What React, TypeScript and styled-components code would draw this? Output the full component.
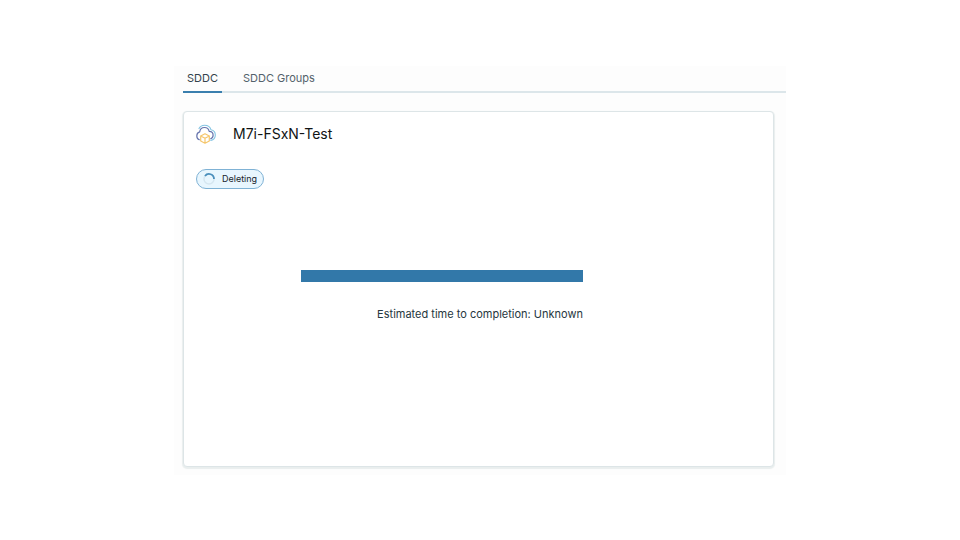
import React, { useState } from "react";
import styled, { createGlobalStyle } from "styled-components";

const GlobalStyle = createGlobalStyle`
  *, *::before, *::after { box-sizing: border-box; }
  body {
    margin: 0;
    background: #ffffff;
    color: #1b2a32;
    font-family: Inter, "Open Sans", sans-serif;
  }
`;

const Page = styled.div`
  padding: 66px 174px 65px;
`;

const Panel = styled.main`
  background: #fdfdfd;
  padding: 0 0 8px 9px;
`;

const TabList = styled.div`
  display: flex;
  gap: 17px;
  height: 27px;
  box-shadow: inset 0 -2px 0 #dce6ea;
`;

const Tab = styled.button<{ $active: boolean }>`
  border: 0;
  border-bottom: 2px solid ${(p) => (p.$active ? "#3a7fae" : "transparent")};
  background: none;
  padding: 0 4px 2px;
  font: 400 11px/22px Inter, sans-serif;
  color: ${(p) => (p.$active ? "#34434b" : "#53626b")};
  cursor: pointer;
`;

const Card = styled.section`
  margin: 18px 12px 0 0;
  min-height: 356px;
  border: 1px solid #dde5e7;
  border-radius: 4px;
  background: #ffffff;
  box-shadow: 0 1px 1px 1px #e9eeee;
  padding: 12px 0;
`;

const CardHeader = styled.header`
  display: flex;
  align-items: center;
  gap: 17px;
  height: 20px;
  padding: 0 12px;
`;

const Title = styled.h1`
  margin: 0;
  font-size: 14px;
  font-weight: 400;
  line-height: 20px;
  color: #101415;
`;

const StatusRow = styled.div`
  display: flex;
  margin-top: 25px;
  padding: 0 12px;
`;

const StatusPill = styled.span`
  display: inline-flex;
  align-items: center;
  gap: 7px;
  height: 20px;
  padding: 0 6px;
  border: 1px solid #7fb2d5;
  border-radius: 10px;
  background: #e8f6fe;
  font-size: 9px;
  line-height: 18px;
  color: #17242b;
`;

const ProgressGrid = styled.div`
  display: grid;
  grid-template-columns: 117fr 282fr 190fr;
  margin-top: 81px;
`;

const ProgressBlock = styled.div`
  grid-column: 2;
  display: flex;
  flex-direction: column;
  gap: 24px;
`;

const Bar = styled.progress`
  appearance: none;
  display: block;
  width: 100%;
  height: 12px;
  border: 0;
  background: #3278a9;
  &::-webkit-progress-bar { background: #3278a9; }
  &::-webkit-progress-value { background: #3278a9; }
`;

const Estimate = styled.label`
  text-align: right;
  white-space: nowrap;
  font-size: 11px;
  line-height: 16px;
  color: #26363e;
`;

const CloudIcon = () => (
  <svg width="20" height="20" viewBox="0 0 20 20" fill="none" strokeLinecap="round" strokeLinejoin="round" aria-hidden="true">
    <path d="M3 4.500C4.200 2.200 6 1.200 8.500 1.200c3.200 0 5.700 1.800 6.500 4.600 2.700.6 4.300 2.500 4.300 5.100 0 2.900-1.800 5-4.500 5.500" stroke="#82c3e2" strokeWidth="1.100" />
    <path d="M3.300 15.700C1.600 15 .8 13.600.8 11.900c0-2 1.100-3.500 2.900-4C4 5.200 5.900 3.500 8.500 3.500c2.300 0 4.200 1.500 4.700 3.900 2.400.1 3.900 1.600 3.900 3.800 0 1.700-.9 3-2.400 3.500" stroke="#6674ad" strokeWidth="1.200" />
    <path d="m9 9.800 4.300 2.200v5L9 19.200 4.700 17v-5L9 9.800ZM4.700 12 9 14.200l4.300-2.200M9 14.200v5" stroke="#f5c66c" strokeWidth="1.200" />
  </svg>
);

const Spinner = () => (
  <svg width="12" height="12" viewBox="0 0 12 12" fill="none" aria-hidden="true">
    <circle cx="6" cy="6" r="5" stroke="#d5e6f0" strokeWidth="1.500" />
    <path d="M2 3A5 5 0 0 1 11 6" stroke="#4a8fbc" strokeWidth="1.800" />
  </svg>
);

const tabs = ["SDDC", "SDDC Groups"];

export default function App() {
  const [active, setActive] = useState(tabs[0]);
  return (
    <>
      <GlobalStyle />
      <Page>
        <Panel>
          <TabList role="tablist">
            {tabs.map((name) => (
              <Tab key={name} type="button" role="tab" aria-selected={name === active} $active={name === active} onClick={() => setActive(name)}>
                {name}
              </Tab>
            ))}
          </TabList>
          <Card>
            <CardHeader>
              <CloudIcon />
              <Title>M7i-FSxN-Test</Title>
            </CardHeader>
            <StatusRow>
              <StatusPill role="status">
                <Spinner />
                Deleting
              </StatusPill>
            </StatusRow>
            <ProgressGrid>
              <ProgressBlock>
                <Bar id="completion" />
                <Estimate htmlFor="completion">Estimated time to completion: Unknown</Estimate>
              </ProgressBlock>
            </ProgressGrid>
          </Card>
        </Panel>
      </Page>
    </>
  );
}
